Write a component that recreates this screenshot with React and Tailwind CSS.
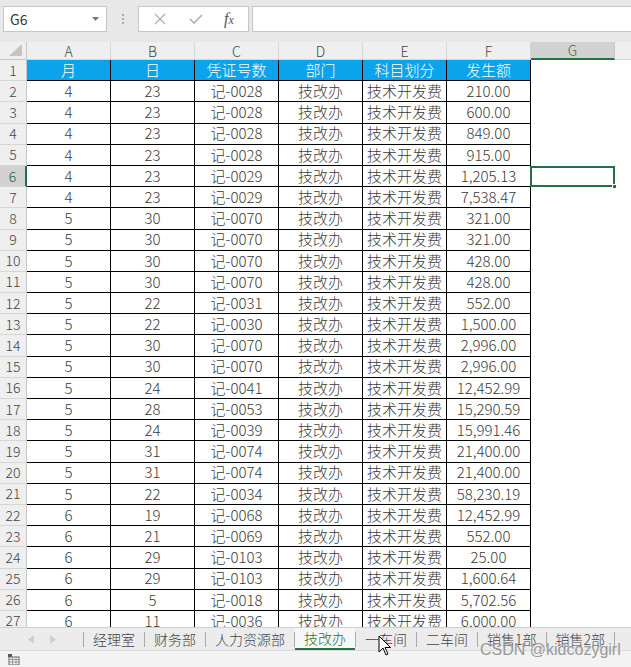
import React from 'react'

const rows = [
  ['4', '23', '记-0028', '210.00'],
  ['4', '23', '记-0028', '600.00'],
  ['4', '23', '记-0028', '849.00'],
  ['4', '23', '记-0028', '915.00'],
  ['4', '23', '记-0029', '1,205.13'],
  ['4', '23', '记-0029', '7,538.47'],
  ['5', '30', '记-0070', '321.00'],
  ['5', '30', '记-0070', '321.00'],
  ['5', '30', '记-0070', '428.00'],
  ['5', '30', '记-0070', '428.00'],
  ['5', '22', '记-0031', '552.00'],
  ['5', '22', '记-0030', '1,500.00'],
  ['5', '30', '记-0070', '2,996.00'],
  ['5', '30', '记-0070', '2,996.00'],
  ['5', '24', '记-0041', '12,452.99'],
  ['5', '28', '记-0053', '15,290.59'],
  ['5', '24', '记-0039', '15,991.46'],
  ['5', '31', '记-0074', '21,400.00'],
  ['5', '31', '记-0074', '21,400.00'],
  ['5', '22', '记-0034', '58,230.19'],
  ['6', '19', '记-0068', '12,452.99'],
  ['6', '21', '记-0069', '552.00'],
  ['6', '29', '记-0103', '25.00'],
  ['6', '29', '记-0103', '1,600.64'],
  ['6', '5', '记-0018', '5,702.56'],
  ['6', '11', '记-0036', '6,000.00'],
]

const heads = ['月', '日', '凭证号数', '部门', '科目划分', '发生额']
const letters = ['A', 'B', 'C', 'D', 'E', 'F', 'G']
const tabs = ['经理室', '财务部', '人力资源部', '技改办', '一车间', '二车间', '销售1部', '销售2部']

const font = { fontFamily: '"Noto Sans CJK SC", "Noto Sans", sans-serif' }

function Cell({ children, className = '' }) {
  return (
    <div className={`w-[84px] shrink-0 flex items-center justify-center whitespace-nowrap border-r border-b border-black ${className}`}>
      {children}
    </div>
  )
}

function RowHead({ n, active }) {
  return (
    <div
      className={`w-[27px] shrink-0 flex items-center justify-center text-[14px] border-b border-[#d6d6d6] ${
        active ? 'bg-[#d2d2d2] border-r-2 border-r-[#217346] text-[#2a5c40]' : 'bg-[#efefef] border-r border-r-[#c8c8c8] text-[#444]'
      }`}
    >
      {n}
    </div>
  )
}

export default function App() {
  return (
    <div className="w-[631px] h-[667px] flex flex-col bg-white overflow-hidden relative text-[#3a3a3a] font-light" style={font}>
      {/* formula bar */}
      <div className="h-[42px] shrink-0 bg-[#e8e8e8] flex items-start pt-[6px]">
        <div className="ml-[3px] w-[104px] h-[26px] bg-white border border-[#c6c6c6] flex items-center justify-between px-[6px]">
          <span className="text-[14px] text-[#333] font-normal">G6</span>
          <svg width="8" height="5" viewBox="0 0 8 5"><path d="M0 0h7L3.5 4z" fill="#777" /></svg>
        </div>
        <div className="w-[31px] h-[26px] flex flex-col items-center justify-center gap-[2px]">
          <span className="w-[2px] h-[2px] bg-[#aaa]" />
          <span className="w-[2px] h-[2px] bg-[#aaa]" />
          <span className="w-[2px] h-[2px] bg-[#aaa]" />
        </div>
        <div className="w-[111px] h-[26px] bg-white border border-[#c6c6c6] flex items-center justify-around px-[4px]">
          <svg width="14" height="14" viewBox="0 0 14 14"><path d="M2 2l10 10M12 2L2 12" stroke="#b0b0b0" strokeWidth="1.3" /></svg>
          <svg width="16" height="14" viewBox="0 0 16 14"><path d="M2 7l4 4 8-8" stroke="#b0b0b0" strokeWidth="1.6" fill="none" /></svg>
          <span className="text-[16px] italic text-[#555]" style={{ fontFamily: '"Liberation Serif", serif' }}>
            f<span className="text-[12px]">x</span>
          </span>
        </div>
        <div className="ml-[3px] flex-1 h-[26px] bg-white border border-[#c6c6c6] border-r-0" />
      </div>

      {/* grid */}
      <div className="flex-1 overflow-hidden text-[15px]">
        {/* column letters */}
        <div className="flex h-[18px]">
          <div className="w-[27px] shrink-0 bg-[#efefef] border-r border-b border-[#c8c8c8] flex items-end justify-end pr-[4px] pb-[3px]">
            <svg width="13" height="12" viewBox="0 0 13 12"><path d="M13 0v12H0z" fill="#c4c4c4" /></svg>
          </div>
          {letters.map((l) => (
            <div
              key={l}
              className={`w-[84px] shrink-0 flex items-center justify-center text-[14px] leading-none ${
                l === 'G' ? 'bg-[#d2d2d2] border-b-2 border-b-[#217346] text-[#3b6a52] border-r border-r-[#c8c8c8]' : 'bg-[#efefef] border-r border-b border-[#d6d6d6] text-[#444]'
              }`}
            >
              {l}
            </div>
          ))}
          <div className="flex-1 bg-[#efefef] border-b border-[#d6d6d6]" />
        </div>

        {/* header row */}
        <div className="flex h-[21.2px]">
          <RowHead n={1} />
          {heads.map((h, i) => (
            <Cell key={i} className="bg-[#0ba3eb] text-white">{h}</Cell>
          ))}
        </div>

        {rows.map((r, i) => (
          <div key={i} className="flex h-[21.2px] relative">
            <RowHead n={i + 2} active={i + 2 === 6} />
            <Cell>{r[0]}</Cell>
            <Cell>{r[1]}</Cell>
            <Cell>{r[2]}</Cell>
            <Cell>技改办</Cell>
            <Cell>技术开发费</Cell>
            <Cell>{r[3]}</Cell>
            {i + 2 === 6 && (
              <div className="w-[85px] shrink-0 border-2 border-[#217346] relative -ml-[1px]">
                <span className="absolute -right-[4px] -bottom-[4px] w-[5px] h-[5px] bg-[#217346] border border-white" />
              </div>
            )}
          </div>
        ))}
      </div>

      {/* sheet tabs */}
      <div className="h-[23px] shrink-0 bg-[#ececec] border-t border-[#d0d0d0] flex items-center text-[14px] text-[#444] whitespace-nowrap">
        <div className="w-[83px] shrink-0 flex items-center justify-center gap-[16px] h-full">
          <svg width="6" height="9" viewBox="0 0 6 9"><path d="M6 0v9L0 4.5z" fill="#cfcfcf" /></svg>
          <svg width="6" height="9" viewBox="0 0 6 9"><path d="M0 0v9l6-4.5z" fill="#cfcfcf" /></svg>
        </div>
        {tabs.map((t) => (
          <div key={t} className="flex items-center h-full shrink-0">
            <span className="w-px h-[15px] bg-[#aaa]" />
            <div
              className={`h-full flex items-center px-[9px] ${
                t === '技改办' ? 'bg-[#f7f7f7] text-[#217346] border-b-2 border-[#217346]' : ''
              }`}
            >
              {t}
            </div>
          </div>
        ))}
        <span className="w-px h-[15px] bg-[#aaa] shrink-0" />
      </div>

      {/* status bar */}
      <div className="h-[17px] shrink-0 bg-[#f3f3f3] border-t border-[#dadada] flex items-center pl-[8px]">
        <svg width="12" height="11" viewBox="0 0 12 11">
          <rect x="0" y="0" width="4" height="3" fill="#555" />
          <rect x="1" y="3" width="10" height="8" fill="none" stroke="#666" strokeWidth="1" />
          <path d="M1 5.5h10M1 8h10M4.5 3v8M8 3v8" stroke="#888" strokeWidth="0.8" />
        </svg>
      </div>

      {/* watermark */}
      <div className="absolute left-[480px] top-[638px] whitespace-nowrap text-[16px] text-[#999] pointer-events-none font-normal" style={{ fontFamily: '"Liberation Sans", sans-serif' }}>
        CSDN @kidcozygirl
      </div>

      {/* mouse cursor */}
      <svg className="absolute left-[378px] top-[635px]" width="14" height="21" viewBox="0 0 14 21">
        <path d="M1 1v16l4-4 3 7 2-1-3-6.5h5.5z" fill="white" stroke="black" strokeWidth="1" strokeLinejoin="round" />
      </svg>
    </div>
  )
}
